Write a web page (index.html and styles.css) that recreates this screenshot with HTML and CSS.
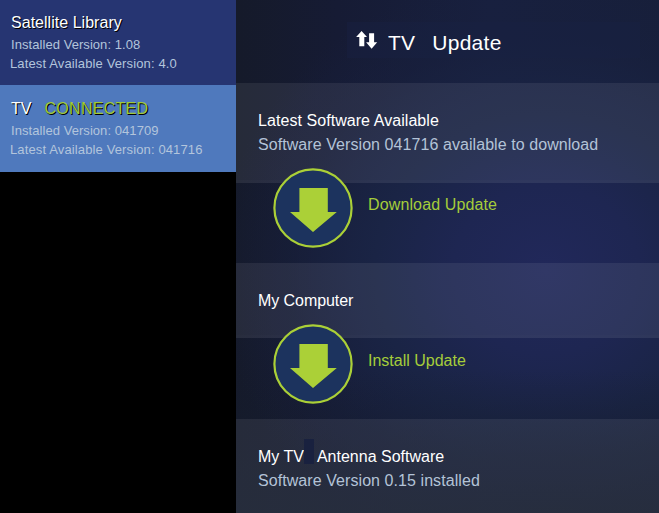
FILE: index.html
```html
<!DOCTYPE html>
<html lang="en">
<head>
<meta charset="utf-8">
<title>TV Update</title>
<link rel="stylesheet" href="styles.css">
</head>
<body>
<div class="app">
  <aside class="sidebar">
    <section class="device">
      <h2 class="device-name">Satellite Library</h2>
      <p class="installed">Installed Version: 1.08</p>
      <p class="latest">Latest Available Version: 4.0</p>
    </section>
    <section class="device device-active">
      <h2 class="device-name">TV<span class="status">CONNECTED</span></h2>
      <p class="installed">Installed Version: 041709</p>
      <p class="latest">Latest Available Version: 041716</p>
    </section>
  </aside>
  <main class="content">
    <header class="header">
      <div class="title-bar">
        <svg class="sync" width="22" height="18" viewBox="0 0 22 18"><path d="M5.6 0 11 6H8.3V15.2H3.3V6H.1ZM13.1 2.3H18.1V11.3H21.2L15.6 17.7 10.1 11.3H13.1Z" fill="#fff"/></svg>
        <h1 class="title"><span>TV</span><span class="title-word">Update</span></h1>
      </div>
    </header>
    <section class="band band-latest">
      <h3>Latest Software Available</h3>
      <p>Software Version 041716 available to download</p>
    </section>
    <div class="action">
      <svg class="disc" width="80" height="80" viewBox="0 0 80 80"><circle cx="40" cy="40" r="38.6" fill="#1c335e" stroke="#abd037" stroke-width="2.2"/><path d="M26.4 20H54.8V44H63.8L40 64 17 44H26.4Z" fill="#abd037"/></svg>
      <span class="action-label">Download Update</span>
    </div>
    <section class="band band-computer">
      <h3>My Computer</h3>
    </section>
    <div class="action action-install">
      <svg class="disc" width="80" height="80" viewBox="0 0 80 80"><circle cx="40" cy="40" r="38.6" fill="#1c335e" stroke="#abd037" stroke-width="2.2"/><path d="M26.4 20H54.8V44H63.8L40 64 17 44H26.4Z" fill="#abd037"/></svg>
      <span class="action-label">Install Update</span>
    </div>
    <section class="band band-tv">
      <h3>My TV<span class="block"></span>Antenna Software</h3>
      <p>Software Version 0.15 installed</p>
    </section>
  </main>
</div>
</body>
</html>
```
FILE: styles.css
```css
* { box-sizing: border-box; }
body, h1, h2, h3, p { margin: 0; font-weight: 400; }
body {
  background: #000;
  color: #fff;
  font-family: "Liberation Sans", Arial, sans-serif;
  overflow: hidden;
}
.app {
  display: grid;
  grid-template-columns: 236px 1fr;
  height: 513px;
}
.device {
  height: 85px;
  padding: 13px 0 0 10px;
  background: #263572;
}
.device-active {
  height: 87px;
  padding-top: 14px;
  background: #4f79bd;
}
.device-name {
  padding-left: 1px;
  font-size: 16px;
  line-height: 20px;
  letter-spacing: .03px;
  text-shadow: 1px 1px 0 #000;
}
.status {
  margin-left: 13px;
  color: #9fca3a;
  letter-spacing: .28px;
}
.installed, .latest {
  font-size: 13px;
  line-height: 19px;
  letter-spacing: .06px;
  color: #b3c5dc;
}
.latest { letter-spacing: .13px; }
.installed { padding-left: 1px; margin-top: 2px; }
.content {
  display: grid;
  grid-template-rows: 83px 100px 80px 75px 81px 94px;
  background:
    linear-gradient(180deg, rgba(21, 29, 45, 0) 72%, rgba(21, 29, 45, .85) 100%),
    radial-gradient(ellipse 330px 300px at 310px 270px, #21285a 0%, #1e2652 28%, #1a2445 52%, rgba(24, 32, 62, .5) 78%, rgba(22, 27, 48, 0) 100%),
    linear-gradient(90deg, #151a2a 0%, #161b34 24%, #18203f 60%, #171f3a 100%);
}
.header { padding: 22px 0 0 111px; }
.title-bar {
  display: flex;
  width: 293px;
  height: 36px;
  padding: 9px 0 0 9px;
  background: rgba(25, 34, 66, .45);
}
.sync { flex: none; }
.title {
  display: flex;
  margin-left: 10px;
  font-size: 21px;
  line-height: 24px;
  letter-spacing: .25px;
}
.title-word { margin-left: 17px; }
.band {
  padding: 28px 0 0 22px;
  background: rgba(255, 255, 255, .073);
  border-bottom: 3px solid rgba(255, 255, 255, .012);
}
.band h3 {
  display: flex;
  font-size: 16px;
  line-height: 20px;
  letter-spacing: .03px;
}
.band-latest h3 { letter-spacing: .06px; }
.band-computer h3 { letter-spacing: -.06px; }
.band p {
  margin-top: 3px;
  font-size: 16px;
  line-height: 22px;
  letter-spacing: .07px;
  color: #b3c3d7;
}
.band-tv { border-bottom: 0; }
.band-tv h3 { letter-spacing: 0; }
.block {
  width: 10px;
  height: 25px;
  margin: -8px 3px -5px 0;
  background: #19213f;
}
.action {
  position: relative;
  z-index: 1;
  display: flex;
  align-items: flex-start;
  padding-left: 37px;
}
.disc { flex: none; margin-top: -15px; }
.action-install .disc { margin-top: -14px; }
.action-label {
  margin: 12px 0 0 15px;
  font-size: 16px;
  line-height: 20px;
  letter-spacing: .13px;
  color: #a5cd3a;
}
.action-install .action-label { margin-top: 13px; letter-spacing: 0; }
```
